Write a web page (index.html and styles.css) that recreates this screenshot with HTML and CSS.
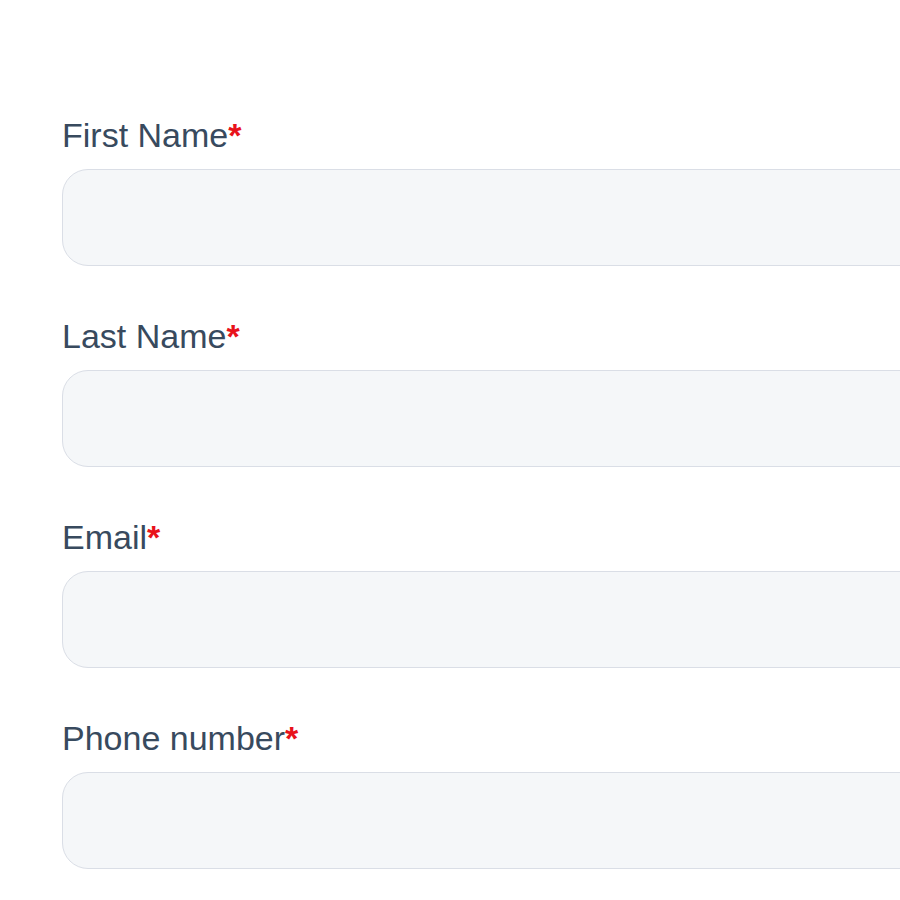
FILE: index.html
```html
<!DOCTYPE html>
<html lang="en">
<head>
  <meta charset="UTF-8">
  <title>Contact form</title>
  <meta name="viewport" content="width=device-width, initial-scale=1">
  <link rel="stylesheet" href="styles.css">
</head>
<body>
  <form class="contact-form">
    <div class="field">
      <label for="first-name">First Name<span class="req">*</span></label>
      <input type="text" id="first-name">
    </div>
    <div class="field">
      <label for="last-name">Last Name<span class="req">*</span></label>
      <input type="text" id="last-name">
    </div>
    <div class="field">
      <label for="email">Email<span class="req">*</span></label>
      <input type="email" id="email">
    </div>
    <div class="field">
      <label for="phone">Phone number<span class="req">*</span></label>
      <input type="tel" id="phone">
    </div>
  </form>
</body>
</html>
```

FILE: styles.css
```css
html, body {
  margin: 0;
  background: #ffffff;
  overflow: hidden;
}
body {
  font-family: "Liberation Sans", Arial, sans-serif;
}
.contact-form {
  padding: 115px 0 0 62px;
  display: flex;
  flex-direction: column;
  gap: 50px;
}
.field {
  display: flex;
  flex-direction: column;
}
.field label {
  font-size: 34px;
  line-height: 40px;
  color: #384a5e;
  margin-bottom: 14px;
}
.req {
  color: #e8121b;
  font-weight: bold;
}
.field input {
  box-sizing: border-box;
  width: 900px;
  height: 97px;
  background: #f5f7f9;
  border: 1.5px solid #dadee6;
  border-radius: 26px;
  outline: none;
}
```
